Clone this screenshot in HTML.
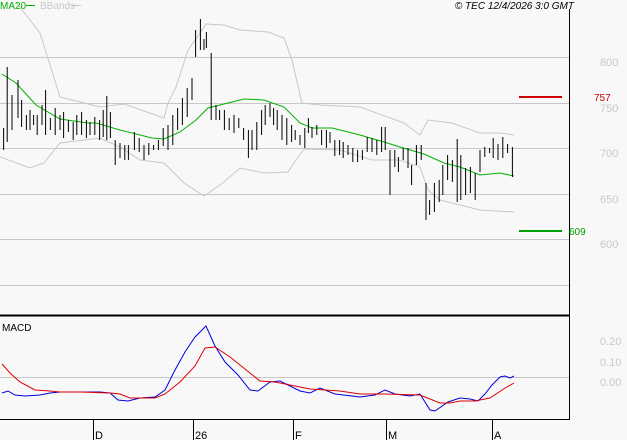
<!DOCTYPE html>
<html><head><meta charset="utf-8"><style>
html,body{margin:0;padding:0;background:#f8f8f8;}
svg{display:block;font-family:"Liberation Sans",sans-serif;}
</style></head><body>
<svg width="627" height="440" viewBox="0 0 627 440" xmlns="http://www.w3.org/2000/svg">
<rect width="627" height="440" fill="#f8f8f8"/>
<g stroke="#c8c8c8" stroke-width="1">
<line x1="0" y1="57.5" x2="569" y2="57.5"/><line x1="0" y1="103.5" x2="569" y2="103.5"/>
<line x1="0" y1="148.5" x2="569" y2="148.5"/><line x1="0" y1="194.5" x2="569" y2="194.5"/>
<line x1="0" y1="239.5" x2="569" y2="239.5"/><line x1="0" y1="285.5" x2="569" y2="285.5"/>
<line x1="0" y1="377.5" x2="569" y2="377.5"/>
</g>
<polyline fill="none" stroke="#c8c8c8" stroke-width="1" points="16,2 40,33 60,97 80,102 100,107 124,104 164,118 168,103 176,87 188,50 200,33 206,24 224,25 240,30 268,32 284,38 292,60 302,103 320,105 360,107 404,123 420,135 428,120 452,123 480,133 500,133 514,135"/>
<polyline fill="none" stroke="#c8c8c8" stroke-width="1" points="0,157 30,168 44,163 60,143 100,138 120,147 140,160 164,163 184,183 204,196 224,182 240,168 264,173 288,172 296,160 304,149 340,150 372,160 400,160 420,167 428,190 440,200 480,210 514,212"/>
<polyline fill="none" stroke="#00b000" stroke-width="1" points="2,74 16,83 36,105 60,119 88,123 96,123 120,130 152,138 164,139 180,132 196,120 208,108 228,103 244,99 264,100 284,107 300,123 312,128 332,128 360,135 384,142 400,147 424,154 444,163 460,167 480,175 500,173 514,176"/>
<g transform="scale(1.2,1)" fill="none">
<path vector-effect="non-scaling-stroke" stroke="#000" stroke-width="1" d="M3,128V150M6,67V142M10,95V130M15,80V118M18,100V127M22,115V130M25,110V130M28,115V125M31,115V135M35,105V125M38,90V135M42,118V130M46,108V135M50,115V130M53,112V138M57,120V132M61,122V140M64,115V135M68,112V135M72,120V138M75,122V135M79,117V135M83,120V140M86,110V137M89,96V140M92,112V138M96,140V165M100,143V158M104,145V160M107,145V160M112,132V150M116,138V152M120,145V160M124,143V155M128,145V150M132,140V150M136,128V146M140,125V150M144,115V145M148,108V130M152,98V125M156,88V117M160,78V100M163,30V57M167,19V50M170,39V50M172,32V48M176,53V120M180,105V120M183,110V120M187,110V130M191,118V130M195,115V133M199,118V128M203,128V140M207,130V158M210,130V150M214,122V150M218,110V135M221,105V125M225,103V117M228,108V125M231,110V130M235,115V140M239,118V145M243,125V142M246,130V140M250,135V145M254,128V148M257,118V133M260,127V138M264,125V135M268,130V145M272,130V148M275,132V143M279,140V156M283,140V155M286,142V158M290,145V155M294,148V162M298,150V162M302,150V160M306,137V152M310,138V152M314,140V155M318,127V152M321,127V150M325,150V195M329,150V167M332,157V172M336,148V160M340,148V168M343,165V185M347,145V165M351,145V160M355,183V220M358,200V215M362,183V212M366,180V202M369,165V195M373,155V180M377,160V182M381,139V202M384,155V200M388,168V195M392,167V193M396,173V200M400,150V172M404,147V157M408,148V153M411,138V158M415,144V160M419,137V158M423,144V153M427,147V177"/>
</g>
<line x1="519" y1="97" x2="562" y2="97" stroke="#cc0000" stroke-width="2"/>
<line x1="519" y1="231" x2="562" y2="231" stroke="#00a000" stroke-width="2"/>
<polyline fill="none" stroke="#0000dd" stroke-width="1" points="2,393 8,391 15,395 25,396 40,395 50,393 60,392 70,392 90,392 100,392 110,393 118,400 128,401 140,398 155,397 165,390 175,370 185,352 195,337 206,326 215,346 225,362 238,375 250,390 258,391 270,382 280,381 288,385 300,391 310,393 320,388 335,394 360,397 375,395 385,390 395,394 410,396 420,394 430,410 435,411 448,402 460,398 470,399 478,401 485,394 492,385 500,377 505,376 510,378 514,376"/>
<polyline fill="none" stroke="#dd0000" stroke-width="1" points="2,364 10,373 20,382 35,390 50,391 60,392 80,392 110,393 120,394 130,398 155,398 165,394 180,382 195,366 205,348 215,347 230,357 245,369 260,381 275,382 290,385 310,389 340,391 360,394 385,394 420,395 440,403 450,403 460,401 475,401 490,398 505,388 514,383"/>
<line x1="569.5" y1="9" x2="569.5" y2="420" stroke="#000" stroke-width="1"/>
<line x1="0" y1="315.5" x2="570" y2="315.5" stroke="#000" stroke-width="2"/>
<line x1="0" y1="419.5" x2="570" y2="419.5" stroke="#000" stroke-width="1"/>
<g stroke="#000" stroke-width="1"><line x1="93.5" y1="420" x2="93.5" y2="440"/><line x1="193.5" y1="420" x2="193.5" y2="440"/><line x1="293.5" y1="420" x2="293.5" y2="440"/><line x1="386.5" y1="420" x2="386.5" y2="440"/><line x1="492.5" y1="420" x2="492.5" y2="440"/></g>
<g font-size="11" fill="#000"><text x="95" y="439">D</text><text x="195" y="439">26</text><text x="295" y="439">F</text><text x="388" y="439">M</text><text x="494" y="439">A</text></g>
<text x="2" y="331" font-size="10" fill="#000">MACD</text>
<text x="0" y="9" font-size="10" fill="#00b000">MA20</text>
<line x1="26" y1="5.5" x2="35" y2="5.5" stroke="#00b000"/>
<text x="40" y="9" font-size="10" fill="#c8c8c8">BBands</text>
<line x1="72" y1="5.5" x2="81" y2="5.5" stroke="#c8c8c8"/>
<text x="574" y="9" font-size="10" font-style="italic" text-anchor="end" fill="#000">© TEC 12/4/2026 3:0 GMT</text>
<g font-size="11" fill="#c8c8c8"><text x="600" y="66">800</text><text x="600" y="112">750</text><text x="600" y="157">700</text><text x="600" y="203">650</text><text x="600" y="248">600</text>
<text x="600" y="345">0.20</text><text x="600" y="366">0.10</text><text x="600" y="386">0.00</text></g>
<text x="594" y="101" font-size="10" fill="#cc0000">757</text>
<text x="569" y="235" font-size="10" fill="#00a000">609</text>
</svg>
</body></html>
